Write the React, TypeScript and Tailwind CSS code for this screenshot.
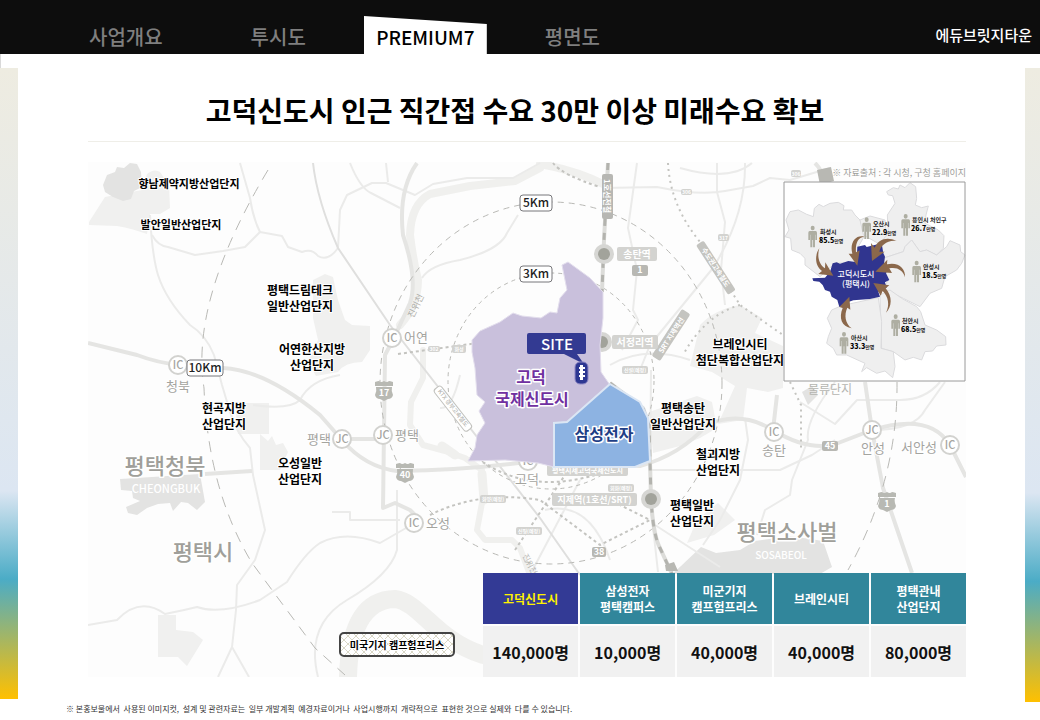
import React from "react";

const demand = [
  { area: ["고덕신도시"], people: "140,000명", primary: true },
  { area: ["삼성전자", "평택캠퍼스"], people: "10,000명", primary: false },
  { area: ["미군기지", "캠프험프리스"], people: "40,000명", primary: false },
  { area: ["브레인시티"], people: "40,000명", primary: false },
  { area: ["평택관내", "산업단지"], people: "80,000명", primary: false },
];

type LabelProps = {
  x: number;
  y: number;
  size: number;
  children: React.ReactNode;
  className?: string;
  anchor?: "start" | "middle" | "end";
  halo?: number;
  rotate?: number;
};

/** Text centred vertically on (x, y), optionally with a white outline. */
function Label({ x, y, size, children, className = "fill-black font-bold", anchor = "middle", halo = 0, rotate = 0 }: LabelProps) {
  return (
    <text
      x={x}
      y={y + Math.round(size * 0.37)}
      fontSize={size}
      textAnchor={anchor}
      className={className}
      stroke={halo ? "#ffffff" : "none"}
      strokeWidth={halo}
      strokeLinejoin="round"
      paintOrder="stroke"
      transform={rotate ? `rotate(${rotate} ${x} ${y})` : undefined}
    >
      {children}
    </text>
  );
}

const complexes = [
  { x: 189, y: 184, size: 11, lines: ["향남제약지방산업단지"] },
  { x: 181, y: 225, size: 11, lines: ["발안일반산업단지"] },
  { x: 300, y: 291, size: 12, lines: ["평택드림테크", "일반산업단지"] },
  { x: 312, y: 350, size: 12, lines: ["어연한산지방", "산업단지"] },
  { x: 224, y: 409, size: 12, lines: ["현곡지방", "산업단지"] },
  { x: 300, y: 464, size: 12, lines: ["오성일반", "산업단지"] },
  { x: 740, y: 345, size: 12, lines: ["브레인시티", "첨단복합산업단지"] },
  { x: 683, y: 409, size: 12, lines: ["평택송탄", "일반산업단지"] },
  { x: 718, y: 455, size: 12, lines: ["철괴지방", "산업단지"] },
  { x: 692, y: 506, size: 12, lines: ["평택일반", "산업단지"] },
];

const junctions = [
  { x: 178, y: 365, code: "IC" },
  { x: 392, y: 338, code: "IC" },
  { x: 342, y: 439, code: "JC" },
  { x: 383, y: 435, code: "JC" },
  { x: 414, y: 523, code: "IC" },
  { x: 528, y: 461, code: "IC" },
  { x: 774, y: 432, code: "IC" },
  { x: 872, y: 430, code: "JC" },
  { x: 950, y: 445, code: "IC" },
];

const places = [
  { x: 178, y: 386, name: "청북" },
  { x: 416, y: 337, name: "어연" },
  { x: 319, y: 439, name: "평택" },
  { x: 407, y: 435, name: "평택" },
  { x: 438, y: 523, name: "오성" },
  { x: 527, y: 479, name: "고덕" },
  { x: 774, y: 450, name: "송탄" },
  { x: 873, y: 448, name: "안성" },
  { x: 919, y: 447, name: "서안성" },
];

const cities = [
  { x: 820, y: 232, name: "화성시", count: "85.5" },
  { x: 873, y: 224, name: "오산시", count: "22.9" },
  { x: 912, y: 220, name: "용인시 처인구", count: "26.7" },
  { x: 923, y: 267, name: "안성시", count: "18.5" },
  { x: 902, y: 321, name: "천안시", count: "68.5" },
  { x: 851, y: 338, name: "아산시", count: "33.3" },
];

function Shield({ x, y, n }: { x: number; y: number; n: string }) {
  return (
    <g>
      <path
        d={`M${x - 9} ${y - 9}q3 -1 4 -1q2 2 5 0q3 2 5 0q1 0 4 1v4h-18zM${x - 8} ${y - 4}h16q-1 4 1 8q-1 4 -5 4l-4 2l-4 -2q-4 0 -5 -4q2 -4 1 -8z`}
        fill="#b8b9b3"
      />
      <Label x={x} y={y + 2} size={9} className="fill-white font-bold">{n}</Label>
    </g>
  );
}

function Distance({ x, y, w, text }: { x: number; y: number; w: number; text: string }) {
  return (
    <g>
      <rect x={x} y={y} width={w} height="16" rx="3" fill="#fff" stroke="#77777a" />
      <Label x={x + w / 2} y={y + 8} size={12} className="fill-[#222222] font-medium">{text}</Label>
    </g>
  );
}

function Station({ x, y }: { x: number; y: number }) {
  return (
    <g>
      <circle cx={x} cy={y} r="10" fill="#d6d6d3" />
      <circle cx={x} cy={y} r="6" fill="#a2a39b" />
    </g>
  );
}

function Plate({ x, y, w, h, text, size }: { x: number; y: number; w: number; h: number; text: string; size: number }) {
  return (
    <g>
      <rect x={x} y={y} width={w} height={h} rx="2" fill="#d3d3d0" />
      <Label x={x + w / 2} y={y + h / 2} size={size} className="fill-white font-bold">{text}</Label>
    </g>
  );
}

function Terrain() {
  return (
    <g>
      <g fill="#f0f0ef">
        <path d="M89 222L105 197L142 190L147 174Q154 168 160 172L169 185L170 208L160 214L150 214L147 234Q130 228 117 226L89 225Z" />
        <path d="M313 280L325 274L333 277L338 300L345 320L352 325L370 326V350L362 362Q345 362 338 372L316 376L308 362L318 340L313 318Z" />
        <path d="M235 403H269V434H238Z" />
        <path d="M260 434L268 441L272 436L276 445L283 443L288 452L280 470H260Z" />
        <path d="M158 615H176V630L193 632L203 640L187 666L178 657H158Z" />
        <path d="M700 325Q715 309 740 305L762 318L755 333L783 346V388L768 392L747 388L743 420L718 424L735 386L712 372L690 366Z" />
        <path d="M649 412L697 396L712 402L717 428L700 438L680 446L653 453Z" />
        <path d="M687 543L697 520L718 503L735 520L714 535Z" />
      </g>
      <g fill="#e3e3e2">
        <path d="M103 185L107 175L115 172L117 167L124 168L130 163L137 164L141 172L142 187L134 191L131 199L123 201L113 197L105 192Z" />
        <path d="M120 479L200 474L205 502L197 510L188 503L181 502L173 511L170 503L158 504L147 508L137 515L128 513L126 507L140 501L133 498L132 491L121 490Z" />
        <path d="M672 574L681 566L701 547L716 553L740 550L755 541L790 536L823 541L832 567L820 574Z" />
        <path d="M802 392L812 386L818 395L808 405Z" />
      </g>
      <g fill="none" stroke="#f0f0ee" strokeLinecap="round" strokeLinejoin="round">
        <path strokeWidth="8" d="M540 168L515 181L470 186L430 194Q411 204 410 235Q413 260 418 280Q418 305 400 325" />
        <path strokeWidth="6" d="M423 350V378L411 402L410 425L423 445L445 451L465 458L482 470L484 492L477 530L485 540H512L520 548L530 575" />
        <path strokeWidth="9" d="M442 446L455 455M482 474L484 500" />
        <path strokeWidth="18" d="M348 677Q350 600 395 599C420 602 435 640 483 655" />
        <path strokeWidth="8" d="M540 164Q575 170 603 184" />
      </g>
    </g>
  );
}

function Roads() {
  return (
    <g fill="none" strokeLinejoin="round">
      <g stroke="#ebebea" strokeWidth="2">
        <path d="M240 163L250 198Q253 218 260 232" />
        <path d="M152 235Q158 246 168 247L195 255L223 251L245 247L260 232L282 236L288 247L302 252Q312 248 318 256Q328 262 338 248L340 210L347 195L372 183L386 183L415 195L433 184L467 178H513L540 163" />
        <path d="M150 215Q152 255 158 275Q166 300 190 325Q206 335 214 355L222 385L230 412Q236 432 250 448L253 475L265 530L255 560L237 585L236 610L232 647L218 677M232 647L249 677" />
        <path d="M88 625L117 620Q140 596 165 614Q185 610 197 607Q220 615 260 600L287 582Q305 553 320 543Q345 530 380 543L413 524" />
        <path d="M397 490V550Q390 575 347 600Q305 625 318 677" />
        <path d="M386 163L388 182M350 163Q360 188 371 193L400 208" />
        <path d="M253 405Q290 410 300 400Q310 380 340 375" />
        <path d="M422 278Q430 265 460 260Q500 250 507 233L518 215" />
        <path d="M637 163L628 228L637 270L633 310L638 320L622 350" />
        <path d="M603 188L657 187Q700 196 725 191L753 186L770 178L790 180L830 168" />
        <path d="M717 163V192L725 222L721 270L725 305" />
        <path d="M680 168Q730 182 752 163" />
        <path d="M745 163Q746 215 713 268L650 345L640 370" />
        <path d="M745 418L748 440L740 480L720 520L703 545M650 470H780L812 455L835 440" />
        <path d="M800 402L835 424L857 400H900Q925 400 940 382" />
        <path d="M835 382Q805 420 808 440L792 480L790 495L765 510L757 535" />
        <path d="M872 430Q915 430 925 410L945 382" />
        <path d="M332 512H350V520H400M440 408Q452 410 460 375" />
        <path d="M655 525L720 567M530 575L580 480M545 510Q590 500 610 560" />
        <path d="M610 365Q645 345 690 360M651 370L650 500L658 572" />
        <path d="M313 163Q317 200 338 248L390 325L540 518L580 575" stroke="#dfdfde" strokeWidth="2" />
      </g>
      <g stroke="#e5e5e3" strokeWidth="4">
        <path d="M88 343L137 355Q158 363 180 365L223 368Q265 370 320 415L342 440Q365 467 397 471Q470 470 533 461L640 466Q680 455 707 425Q740 410 773 430Q805 450 833 445L872 430Q930 412 950 445L966 477" />
        <path d="M417 163Q398 190 403 235Q418 280 410 303Q400 325 393 340L385 355L383 508L395 503L410 510L418 518M342 439H383" />
        <path d="M205 474L252 471M777 395L773 430M865 382L872 430L883 488L912 573" />
        <path d="M815 163Q830 178 818 195" />
      </g>
      <g stroke="#b9b9b5">
        <path d="M268 170Q190 300 204 388Q208 490 252 563L315 648L345 675" strokeDasharray="11 8" />
        <ellipse cx="551" cy="383" rx="171" ry="181" strokeDasharray="6 5" />
        <ellipse cx="551" cy="381" rx="103" ry="108" strokeDasharray="4 4" />
        <path d="M897 382Q898 480 848 570" strokeDasharray="11 8" />
      </g>
      <g stroke="#c4c4c0" strokeWidth="2">
        <path d="M668 163Q670 205 700 242L740 305L783 335M740 305Q705 315 683 355M790 382L801 405V450" strokeDasharray="2 4" />
        <path d="M553 163Q562 175 600 187M430 515Q480 490 540 500L600 545L650 520L610 500" strokeDasharray="3 3" />
        <path d="M398 354L478 343M473 455Q530 500 610 470M515 550L545 505L565 475" strokeDasharray="3 3" />
      </g>
      <path d="M608 163L604 240L602 292M610 383L643 408L649 425L651 498Q653 535 660 548L672 574" stroke="#dcdcd9" strokeWidth="4" />
      <path d="M608 163L604 240L602 292M610 383L643 408L649 425L651 498Q653 535 660 548L672 574" stroke="#b3b3ae" strokeWidth="3" strokeDasharray="7 7" />
    </g>
  );
}

function Inset() {
  return (
    <g>
      <rect x="784" y="182" width="182" height="199" fill="#fff" />
      <g transform="translate(770 155) scale(0.3333)">
        <g fill="#efefef" stroke="#dbdbdd" strokeWidth="3" strokeLinejoin="round">
          <path d="M45 245L57 225L48 195L60 170L85 165L110 178L130 185L133 160L147 148L160 155L180 145L205 142L222 152L220 165L245 165L255 180L270 195L285 240L265 275L260 320L195 325L150 365L105 330L105 310L90 295L65 285L62 250Z" />
          <path d="M270 195L300 183L345 195L352 260L330 268L280 240Z" />
          <path d="M350 110L370 98L385 102L390 90L405 98L420 83L437 95L440 130L436 150L455 158L475 153L468 180L465 205L505 225L522 242L520 280L500 300L470 285L450 290L425 255L405 275L400 290L345 308L330 265L355 235L352 180L375 145L368 122L355 120Z" />
          <path d="M345 308L400 290L405 275L425 255L450 290L470 285L500 300L530 275L540 257L570 270L572 290L585 300L575 325L560 345L525 365L515 400L480 415L450 455L400 430L340 400L355 375L340 330Z" />
          <path d="M330 420L360 405L395 430L440 455L452 470L465 510L500 525L527 545L528 570L500 573L488 588L465 590L455 615L430 607L405 615L370 590L335 580Z" />
          <path d="M185 465L215 452L325 428L335 500L333 580L370 590L375 635L368 668L345 648L320 655L290 638L275 650L285 625L230 600L200 600L190 580L170 565L175 545L185 520L172 490Z" />
        </g>
        <path fill="#30358f" d="M127 370L165 368L180 350L188 325L200 322L210 326L235 318L260 322L262 275L285 270L290 276L335 265L340 295L345 305L342 325L357 335L348 355L358 375L345 382L350 398L325 410L330 425L300 432L250 436L225 445L208 456L202 435L185 425L180 410L165 405L158 390L148 380L130 378Z" />
        <g fill="#8b684b">
          <path d="M148 280C140 305 148 330 165 340L166 322L190 362L145 357L156 348C134 333 134 300 148 280Z" />
          <path d="M283 245C262 247 256 268 258 292L269 286L262 332L236 296L247 296C238 262 258 238 283 245Z" />
          <path d="M380 258C352 254 332 272 328 290L344 290L306 318L303 264L314 278C325 252 352 244 380 258Z" />
          <path d="M405 367C400 345 380 335 358 340L366 354L316 350L352 314L351 328C385 320 407 340 405 367Z" />
          <path d="M348 473C360 450 355 425 338 408L332 422L310 384L358 391L347 400C368 425 366 455 348 473Z" />
          <path d="M245 520C225 505 222 480 232 458L241 464L238 425L208 456L218 459C206 488 214 515 245 520Z" />
        </g>
        <g fill="#aeaea2">
          {[[128, 245], [290, 220], [407, 210], [440, 350], [377, 511], [222, 564]].map(([x, y]) => (
            <path
              key={`${x}-${y}`}
              d={`M${x} ${y - 33}a6 7 0 1 1 0 14a6 7 0 1 1 0 -14zM${x - 9} ${y - 17}h18q4 1 4 5v22h-5v-16h-1v38h-6v-22h-2v22h-6v-38h-1v16h-5v-22q0 -4 4 -5z`}
            />
          ))}
        </g>
      </g>
      <path d="M784 182H965V381H784Z" fill="none" stroke="#9a9a9a" />
      <Label x={856} y={274} size={8} className="fill-white font-medium">고덕시도시</Label>
      <Label x={856} y={284} size={8} className="fill-white font-medium">(평택시)</Label>
      {cities.map((c) => (
        <g key={c.name}>
          <Label x={c.x} y={c.y} size={6} anchor="start" className="fill-[#222222] font-bold">{c.name}</Label>
          <Label x={c.x - 1} y={c.y + 8} size={7} anchor="start" className="fill-black font-black">
            {c.count}
            <tspan fontSize="5" fontWeight="500">만명</tspan>
          </Label>
        </g>
      ))}
    </g>
  );
}

function AreaMap() {
  return (
    <svg viewBox="88 162 878 515" className="block h-auto w-full" role="img" aria-label="고덕신도시 주변 산업단지 지도">
      <defs>
        <pattern id="lattice" width="8" height="8" patternUnits="userSpaceOnUse">
          <path d="M0 0L8 8M8 0L0 8" stroke="#d9d7c6" strokeWidth="1" />
        </pattern>
      </defs>
      <rect x="88" y="162" width="878" height="515" fill="#fdfdfd" />
      <Terrain />
      <Roads />

      <g>
        <rect x="602" y="174" width="11" height="45" rx="2" fill="#b7b7b3" />
        <Label x={607} y={196} size={8} rotate={90} className="fill-white font-bold">1호선전철</Label>
        <g transform="rotate(57 716 267)">
          <rect x="687" y="263" width="59" height="9" rx="2" fill="#c4c4c0" />
          <Label x={716} y={267} size={7} className="fill-white font-bold">수도권고속철도</Label>
        </g>
        <g transform="rotate(-57 671 335)">
          <rect x="643" y="330" width="56" height="10" rx="2" fill="#c4c4c0" />
          <Label x={671} y={335} size={7} className="fill-white font-bold">SRT 지제역선</Label>
        </g>
        <g transform="rotate(52 453 408)">
          <rect x="427" y="404" width="53" height="9" rx="3" fill="#fff" stroke="#c1c1bd" />
          <Label x={453} y={408} size={6} className="fill-[#b5b5b1] font-medium">KTX 경부고속철도</Label>
        </g>
      </g>
      <Station x={604} y={254} />
      <Station x={602} y={342} />
      <Station x={651} y={499} />
      <Plate x={617} y={247} w={40} h={14} size={10} text="송탄역" />
      <Plate x={612} y={335} w={46} h={14} size={10} text="서정리역" />
      <Plate x={552} y={493} w={85} h={13} size={9} text="지제역(1호선/SRT)" />
      <Plate x={547} y={464} w={81} h={12} size={7} text="평택지제고덕국제신도시" />
      <Plate x={608} y={484} w={26} h={8} size={5} text="회화(예정)" />
      <Plate x={480} y={495} w={26} h={8} size={5} text="화양(예정)" />
      <Plate x={516} y={527} w={26} h={8} size={5} text="신평(예정)" />
      <Plate x={622} y={366} w={26} h={8} size={5} text="신설(예정)" />
      <Plate x={452} y={345} w={14} h={8} size={5} text="화성" />
      <Plate x={428} y={346} w={12} h={6} size={5} text="302" />
      <Plate x={681} y={189} w={11} h={6} size={5} text="306" />
      <Plate x={718} y={234} w={11} h={7} size={5} text="317" />
      <Plate x={791} y={170} w={10} h={7} size={5} text="306" />
      <g fill="#b8b8b3">
        <rect x="632" y="265" width="16" height="11" rx="2" />
        <rect x="592" y="547" width="14" height="10" rx="2" />
        <rect x="822" y="441" width="16" height="10" rx="2" />
        <path d="M817 170l14 -3l3 14l-14 4zM665 565l9 -3l4 9h-12z" />
      </g>
      <Label x={640} y={270} size={9} className="fill-white font-bold">1</Label>
      <Label x={599} y={552} size={9} className="fill-white font-bold">38</Label>
      <Label x={830} y={446} size={9} className="fill-white font-bold">45</Label>
      <Shield x={384} y={391} n="17" />
      <Shield x={405} y={473} n="40" />
      <Shield x={887} y={502} n="1" />

      {junctions.map((j) => (
        <g key={`${j.x}-${j.y}`}>
          <circle cx={j.x} cy={j.y} r="9" fill="#fff" stroke="#d2d2cf" strokeWidth="2" />
          <Label x={j.x} y={j.y} size={11} className="fill-[#a6a6a2] font-medium">{j.code}</Label>
        </g>
      ))}
      {places.map((p) => (
        <Label key={`${p.x}-${p.y}`} x={p.x} y={p.y} size={13} halo={2} className="fill-[#a4a49f] font-normal">{p.name}</Label>
      ))}
      <Label x={830} y={390} size={12} className="fill-[#b5b5b1] font-normal">물류단지</Label>
      <Label x={416} y={306} size={9} rotate={-64} className="fill-[#adada8] font-normal">진위천</Label>
      <Label x={530} y={564} size={8} rotate={62} className="fill-[#b5b5b1] font-normal">진위천</Label>
      <Label x={165} y={466} size={22} halo={3} className="fill-[#a09f9a] font-medium">평택청북</Label>
      <Label x={166} y={489} size={11} className="fill-white font-medium">CHEONGBUK</Label>
      <Label x={203} y={552} size={22} halo={3} className="fill-[#a09f9a] font-medium">평택시</Label>
      <Label x={787} y={532} size={22} halo={3} className="fill-[#a09f9a] font-medium">평택소사벌</Label>
      <Label x={781} y={555} size={10} className="fill-white font-medium">SOSABEOL</Label>

      <path
        d="M472 340L480 331L500 322L513 313L522 316L541 318L550 312L557 313L560 298L567 290L562 265L568 262L590 278L603 292L603 318L600 345L601 372L610 385L567 422L554 423V467L538 463L505 460L468 461L475 448L477 435L485 423L479 411L485 402L477 395L475 368L472 352Z"
        fill="#c9c0dc"
        stroke="#e3deed"
      />
      <path d="M610 384L640 402L648 418L650 461L635 467H554V423L567 422Z" fill="#8db3e2" stroke="#dbe6f4" strokeWidth="2" />
      <path d="M529 333H584Q586 333 586 335V352Q586 354 584 354H577L584 364L564 354H529Q527 354 527 352V335Q527 333 529 333Z" fill="#333a92" />
      <Label x={557} y={344} size={15} className="fill-white font-medium">SITE</Label>
      <rect x="575" y="362" width="13" height="22" rx="5" fill="#2d3791" stroke="#8f88c4" />
      <path d="M580 365h3v2h2v2h-2v2h2v2h-2v2h2v2h-2v3h-3v-3h-1v-2h1v-2h-1v-2h1v-2h-1v-2h1z" fill="#fff" />
      <Label x={531} y={377} size={16} halo={3} className="fill-[#7030a0] font-bold">고덕</Label>
      <Label x={532} y={399} size={16} halo={3} className="fill-[#7030a0] font-bold">국제신도시</Label>
      <Label x={604} y={434} size={16} halo={3} className="fill-[#1f3f86] font-bold">삼성전자</Label>

      {complexes.map((c) =>
        c.lines.map((line, i) => (
          <Label key={`${c.x}-${line}`} x={c.x} y={c.y + i * 16} size={c.size} halo={2}>{line}</Label>
        )),
      )}
      <Distance x={520} y={195} w={32} text="5Km" />
      <Distance x={520} y={266} w={32} text="3Km" />
      <Distance x={187} y={360} w={36} text="10Km" />

      <rect x="340" y="633" width="114" height="23" rx="4" fill="#fff" />
      <rect x="340" y="633" width="114" height="23" rx="4" fill="url(#lattice)" stroke="#444" strokeWidth="2" />
      <Label x={397} y={645} size={10} halo={2}>미국기지 캠프험프리스</Label>

      <Label x={966} y={173} size={9} anchor="end" className="fill-[#9d9d9a] font-normal">※ 자료출처 : 각 시청, 구청 홈페이지</Label>
      <Inset />
    </svg>
  );
}

function DemandTable() {
  return (
    <div className="absolute right-0 bottom-0 w-[55%]">
      <table className="-m-0.5 w-[calc(100%+4px)] table-fixed border-separate border-spacing-0.5 text-center">
        <thead>
          <tr>
            {demand.map((d) => (
              <th
                key={d.people + d.area[0]}
                scope="col"
                className={
                  d.primary
                    ? "h-[51px] bg-[#333a95] p-0 text-xs leading-4 font-bold text-[#fff200]"
                    : "h-[51px] bg-[#31869b] p-0 text-xs leading-4 font-bold text-white"
                }
              >
                {d.area.map((line) => (
                  <span key={line} className="block">{line}</span>
                ))}
              </th>
            ))}
          </tr>
        </thead>
        <tbody>
          <tr>
            {demand.map((d) => (
              <td key={d.people + d.area[0]} className="h-[51px] bg-[#f1f1f1] p-0 text-base font-bold text-[#111111]">
                {d.people}
              </td>
            ))}
          </tr>
        </tbody>
      </table>
    </div>
  );
}

export default function App() {
  return (
    <div className="flex min-h-screen flex-col bg-white font-['Noto_Sans_CJK_KR','Noto_Sans',sans-serif] text-black">
      <header className="flex h-[54px] items-end justify-between bg-[#0d0d0d] pr-2 pl-[89px]">
        <nav className="flex items-end gap-[58px] text-xl leading-[34px] font-medium text-[#7f7f7f]">
          <a href="#overview" className="mr-[30px]">사업개요</a>
          <a href="#perspective">투시도</a>
          <a
            href="#premium"
            aria-current="page"
            className="flex h-[38px] w-[123px] items-end justify-center bg-white text-[19px] text-black [clip-path:polygon(0_0,100%_21%,100%_100%,0_100%)]"
          >
            PREMIUM7
          </a>
          <a href="#plan">평면도</a>
        </nav>
        <a href="#home" className="text-[15px] leading-[38px] font-medium text-white">에듀브릿지타운</a>
      </header>

      <div className="flex flex-1">
        <div className="mb-[21px] flex w-[18px] shrink-0 flex-col">
          <div className="h-3.5 border-l border-[#d9d9d9]" />
          <div className="flex-1 bg-[linear-gradient(#eeece1,#dce6f2_67%,#4bacc6_81%,#ffc000)]" />
        </div>
        <main className="flex min-w-0 flex-1 flex-col pr-[59px] pl-12">
          <section className="ml-[22px]">
            <h1 className="border-b border-[#efeee8] pt-9 pr-6 pb-[11px] text-center text-[28px] leading-10 font-bold">
              고덕신도시 인근 직간접 수요 30만 이상 미래수요 확보
            </h1>
            <div className="relative mt-5">
              <AreaMap />
              <DemandTable />
            </div>
          </section>
          <p className="mt-6 text-[8px] leading-4 whitespace-pre-wrap text-[#333333]">
            {"※ 본홍보물에서  사용된 이미지컷,  설계 및 관련자료는  일부 개발계획  예경자료이거나  사업시행까지  개략적으로  표현한 것으로 실제와  다를 수 있습니다."}
          </p>
        </main>
        <div className="mt-3.5 mb-[18px] w-[15px] shrink-0 bg-[linear-gradient(#eeece1,#dce6f2_67%,#4bacc6_81%,#ffc000)]" />
      </div>
    </div>
  );
}
